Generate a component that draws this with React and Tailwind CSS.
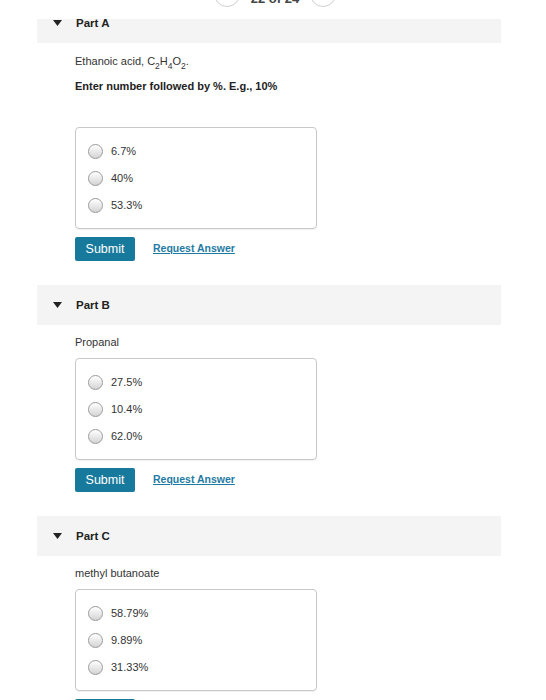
import React from "react";
import { ChevronLeft, ChevronRight } from "lucide-react";

const parts = [
  {
    label: "Part A",
    first: true,
    prompt: (
      <>
        Ethanoic acid, C<sub className="text-[8.5px] align-[-2px]">2</sub>H<sub className="text-[8.5px] align-[-2px]">4</sub>O<sub className="text-[8.5px] align-[-2px]">2</sub>.
      </>
    ),
    note: "Enter number followed by %. E.g., 10%",
    options: ["6.7%", "40%", "53.3%"],
  },
  { label: "Part B", prompt: "Propanal", options: ["27.5%", "10.4%", "62.0%"] },
  { label: "Part C", prompt: "methyl butanoate", options: ["58.79%", "9.89%", "31.33%"] },
];

function Caret() {
  return (
    <svg width="9" height="6" viewBox="0 0 9 6" className="shrink-0">
      <polygon points="0,0 9,0 4.5,6" fill="#222" />
    </svg>
  );
}

function Radio() {
  return (
    <span className="w-[15px] h-[15px] rounded-full border border-[#9a9a9a] bg-gradient-to-b from-white to-[#d4d4d4] shadow-[inset_0_1px_1px_rgba(255,255,255,0.8)] shrink-0" />
  );
}

function Part({ part }) {
  return (
    <div>
      <div
        className={`ml-[37px] w-[464px] bg-[#f4f4f4] flex pl-[16px] ${
          part.first ? "h-[24px] items-start" : "h-[40px] items-center"
        }`}
      >
        <div className={`flex items-center gap-[14px] ${part.first ? "-mt-[3px]" : ""}`}>
          <Caret />
          <span className="text-[11.5px] font-bold text-[#222] leading-[14px]">{part.label}</span>
        </div>
      </div>
      <div className="ml-[75px]">
        <p className={`text-[11px] leading-[16px] text-[#333] ${part.first ? "mt-[10px]" : "mt-[9px]"}`}>
          {part.prompt}
        </p>
        {part.note && (
          <p className="mt-[9px] text-[11px] leading-[16px] font-bold text-[#222]">{part.note}</p>
        )}
        <div
          className={`w-[242px] border border-[#c8c8c8] rounded-[4px] shadow-[0_1px_1px_rgba(0,0,0,0.06)] pt-[10px] pb-[9px] pl-[12px] ${
            part.note ? "mt-[33px]" : "mt-[8px]"
          }`}
        >
          {part.options.map((o) => (
            <div key={o} className="h-[27px] flex items-center gap-[8px]">
              <Radio />
              <span className="text-[11px] text-[#333]">{o}</span>
            </div>
          ))}
        </div>
        <div className="mt-[8px] flex items-center gap-[18px]">
          <button className="w-[60px] h-[24px] rounded-[2px] bg-[#177a9c] text-white text-[12.5px]">
            Submit
          </button>
          <a className="text-[10.5px] font-bold text-[#1f7ba3] underline">Request Answer</a>
        </div>
      </div>
    </div>
  );
}

export default function App() {
  return (
    <div
      className="w-[546px] h-[700px] overflow-hidden bg-white"
      style={{ fontFamily: '"Liberation Sans", Arial, sans-serif' }}
    >
      <div className="h-[19px] relative overflow-hidden">
        <div className="absolute left-0 right-0 -top-[19px] flex items-center justify-center gap-[11px] pl-[4px]">
          <span className="w-[26px] h-[26px] rounded-full border border-[#cfcfcf] flex items-center justify-center text-[#999]">
            <ChevronLeft size={14} strokeWidth={1.5} />
          </span>
          <span className="mt-[8px] text-[13px] leading-[15px] font-bold text-[#444]">22 of 24</span>
          <span className="w-[26px] h-[26px] rounded-full border border-[#cfcfcf] flex items-center justify-center text-[#999]">
            <ChevronRight size={14} strokeWidth={1.5} />
          </span>
        </div>
      </div>
      <div className="flex flex-col gap-[24px]">
        {parts.map((p) => (
          <Part key={p.label} part={p} />
        ))}
      </div>
    </div>
  );
}
